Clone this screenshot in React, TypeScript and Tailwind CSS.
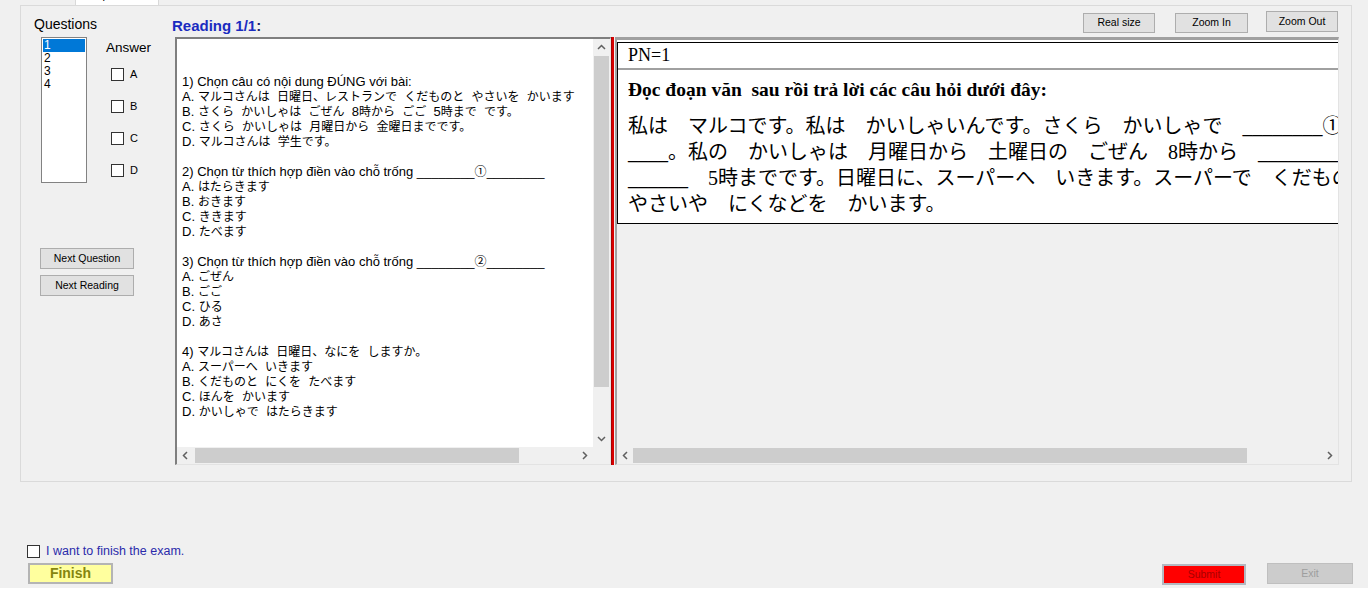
import React from "react";

// CJK runs get a slightly smaller size so kana lines fit like the original textbox
const cjkRun = /([\u2460-\u24ff\u3000-\u30ff\u4e00-\u9fff\uff00-\uffef]+)/;

function Mixed({ text }: { text: string }) {
    const parts = text.split(cjkRun);
    return (
        <>
            {parts.map((p, i) =>
                i % 2 === 1 ? (
                    <span key={i} className="text-[12px]">{p}</span>
                ) : (
                    <React.Fragment key={i}>{p}</React.Fragment>
                )
            )}
        </>
    );
}

const questionLines = [
    "1) Chọn câu có nội dung ĐÚNG với bài:",
    "A. マルコさんは  日曜日、レストランで  くだものと  やさいを  かいます",
    "B. さくら  かいしゃは  ごぜん  8時から  ごご  5時まで  です。",
    "C. さくら  かいしゃは  月曜日から  金曜日までです。",
    "D. マルコさんは  学生です。",
    "",
    "2) Chọn từ thích hợp điền vào chỗ trống ________①________",
    "A. はたらきます",
    "B. おきます",
    "C. ききます",
    "D. たべます",
    "",
    "3) Chọn từ thích hợp điền vào chỗ trống ________②________",
    "A. ごぜん",
    "B. ごご",
    "C. ひる",
    "D. あさ",
    "",
    "4) マルコさんは  日曜日、なにを  しますか。",
    "A. スーパーへ  いきます",
    "B. くだものと  にくを  たべます",
    "C. ほんを  かいます",
    "D. かいしゃで  はたらきます",
];

const readingLines = [
    "私は　マルコです。私は　かいしゃいんです。さくら　かいしゃで　________①",
    "____。私の　かいしゃは　月曜日から　土曜日の　ごぜん　8時から　________②",
    "______　5時までです。日曜日に、スーパーへ　いきます。スーパーで　くだものや",
    "やさいや　にくなどを　かいます。",
];

function Chevron({ dir }: { dir: "up" | "down" | "left" | "right" }) {
    const pts = {
        up: "1,6 4.5,2.5 8,6",
        down: "1,3 4.5,6.5 8,3",
        left: "6,1 2.5,4.5 6,8",
        right: "3,1 6.5,4.5 3,8",
    }[dir];
    return (
        <svg width="9" height="9" viewBox="0 0 9 9">
            <polyline points={pts} fill="none" stroke="#606060" strokeWidth="1.5" />
        </svg>
    );
}

function WinButton({ label, className = "" }: { label: string; className?: string }) {
    return (
        <div className={`bg-[#e1e1e1] border border-[#adadad] text-[10.5px] flex items-center justify-center ${className}`}>
            {label}
        </div>
    );
}

function Check() {
    return <div className="w-[13px] h-[13px] bg-white border border-[#333333] shrink-0" />;
}

export default function App() {
    return (
        <div className="w-[1372px] h-[594px] bg-white overflow-hidden font-['Liberation_Sans',sans-serif] text-black">
            <div className="w-[1368px] h-[588px] bg-[#f0f0f0] flex flex-col overflow-hidden">
                {/* tab strip, mostly scrolled out of view */}
                <div className="h-[5px] shrink-0 overflow-hidden">
                    <div className="-mt-[15px] h-[20px] flex items-end pl-[22px] text-[11px]">
                        <div className="w-[53px] h-[18px] flex items-center justify-end pr-[8px]">3</div>
                        <div className="w-[84px] h-[20px] bg-white border border-b-0 border-[#d9d9d9] flex items-center justify-center">
                            Multiple Choice
                        </div>
                    </div>
                </div>

                {/* tab page */}
                <div className="ml-[20px] w-[1332px] h-[477px] shrink-0 border border-[#dadada] flex pl-[13px] pr-[12px]">
                    {/* Left Col - question list + answers */}
                    <div className="w-[138px] shrink-0 flex flex-col">
                        <div className="mt-[10px] h-[16px] text-[14px] leading-[16px]">Questions</div>
                        <div className="mt-[5px] flex">
                            <div className="ml-[7px] w-[46px] h-[146px] bg-white border border-[#828282] text-[12px] leading-[13px] p-[1px]">
                                <div className="h-[13px] bg-[#0078d7] text-white pl-[1px]">1</div>
                                <div className="h-[13px] pl-[1px]">2</div>
                                <div className="h-[13px] pl-[1px]">3</div>
                                <div className="h-[13px] pl-[1px]">4</div>
                            </div>
                            <div className="ml-[19px] flex flex-col">
                                <div className="mt-[3px] text-[13.5px] leading-[16px]">Answer</div>
                                <div className="mt-[12px] ml-[5px] flex flex-col gap-[19px]">
                                    {["A", "B", "C", "D"].map((l) => (
                                        <div key={l} className="h-[13px] flex items-center">
                                            <Check />
                                            <span className="ml-[6px] text-[11px]">{l}</span>
                                        </div>
                                    ))}
                                </div>
                            </div>
                        </div>
                        <WinButton label="Next Question" className="mt-[65px] ml-[6px] w-[94px] h-[21px]" />
                        <WinButton label="Next Reading" className="mt-[6px] ml-[6px] w-[94px] h-[21px]" />
                    </div>

                    {/* Right Col - reading */}
                    <div className="flex-1 min-w-0 flex flex-col">
                        <div className="h-[31px] flex items-start">
                            <div className="mt-[11px] text-[15px] font-bold leading-[17px]">
                                <span className="text-[#1a2bc0]">Reading 1/1</span>
                                <span className="text-[#222266]">:</span>
                            </div>
                            <div className="flex-1" />
                            <WinButton label="Real size" className="mt-[7px] w-[72px] h-[20px]" />
                            <WinButton label="Zoom In" className="mt-[7px] ml-[20px] w-[73px] h-[20px]" />
                            <WinButton label="Zoom Out" className="mt-[5px] ml-[18px] mr-[1px] w-[72px] h-[21px]" />
                        </div>

                        <div className="h-[428px] flex">
                            {/* questions text box */}
                            <div className="ml-[3px] w-[436px] flex flex-col bg-white border-l-2 border-t-2 border-r border-b border-[#7f7f7f] border-r-[#e3e3e3] border-b-[#e3e3e3]">
                                <div className="flex-1 min-h-0 flex">
                                    <div className="flex-1 min-w-0 overflow-hidden pt-[35px] pl-[5px] text-[13px] leading-[15px] whitespace-pre font-['Liberation_Sans','Noto_Sans_CJK_JP',sans-serif]">
                                        {questionLines.map((t, i) => (
                                            <div key={i} className="h-[15px]">
                                                <Mixed text={t} />
                                            </div>
                                        ))}
                                    </div>
                                    <div className="w-[17px] flex flex-col bg-[#f0f0f0]">
                                        <div className="h-[17px] flex items-center justify-center">
                                            <Chevron dir="up" />
                                        </div>
                                        <div className="h-[331px] mx-[1px] bg-[#cdcdcd]" />
                                        <div className="flex-1" />
                                        <div className="h-[17px] flex items-center justify-center">
                                            <Chevron dir="down" />
                                        </div>
                                    </div>
                                </div>
                                <div className="h-[17px] flex bg-[#f0f0f0]">
                                    <div className="w-[17px] flex items-center justify-center">
                                        <Chevron dir="left" />
                                    </div>
                                    <div className="ml-[1px] my-[1px] w-[324px] bg-[#cdcdcd]" />
                                    <div className="flex-1" />
                                    <div className="w-[17px] flex items-center justify-center">
                                        <Chevron dir="right" />
                                    </div>
                                    <div className="w-[17px]" />
                                </div>
                            </div>

                            {/* splitter */}
                            <div className="w-[4px] bg-[#d90000] border-l border-l-[#a80000] border-r border-r-[#f0f0f0]" />

                            {/* reading passage viewer */}
                            <div className="flex-1 min-w-0 flex flex-col bg-[#f0f0f0] border-l-2 border-t-[3px] border-r border-b border-[#a0a0a0] border-r-[#e3e3e3] border-b-[#e3e3e3]">
                                <div className="flex-1 min-h-0 overflow-hidden font-['Liberation_Serif','Noto_Sans_CJK_JP',serif]">
                                    <div className="h-[2px] bg-white" />
                                    <div className="bg-white border-l border-t border-b border-black">
                                        <div className="h-[25px] pl-[10px] text-[18px] leading-[25px]">PN=1</div>
                                        <div className="h-[2px] bg-[#a0a0a0]" />
                                        <div className="pl-[10px] pt-[10px] pb-[6px]">
                                            <div className="text-[19.5px] font-bold leading-[20px] whitespace-pre">
                                                Đọc đoạn văn  sau rồi trả lời các câu hỏi dưới đây:
                                            </div>
                                            <div className="mt-[13px] text-[20px] leading-[26px] whitespace-pre">
                                                {readingLines.map((t, i) => (
                                                    <div key={i}>{t}</div>
                                                ))}
                                            </div>
                                        </div>
                                    </div>
                                </div>
                                <div className="h-[17px] flex">
                                    <div className="w-[16px] flex items-center justify-center">
                                        <Chevron dir="left" />
                                    </div>
                                    <div className="my-[1px] w-[614px] bg-[#cdcdcd]" />
                                    <div className="flex-1" />
                                    <div className="w-[17px] flex items-center justify-center">
                                        <Chevron dir="right" />
                                    </div>
                                </div>
                            </div>
                        </div>
                    </div>
                </div>

                {/* bottom bar */}
                <div className="mt-[63px] pl-[27px] h-[13px] flex items-center">
                    <Check />
                    <span className="ml-[6px] text-[12.5px] leading-[13px] text-[#2b2bab]">I want to finish the exam.</span>
                </div>
                <div className="mt-[5px] pl-[28px] pr-[15px] flex items-start">
                    <div className="w-[85px] h-[21px] bg-[#ffff9e] border-2 border-[#b4b4b4] flex items-center justify-center text-[14px] font-bold text-[#85850f]">
                        Finish
                    </div>
                    <div className="flex-1" />
                    <div className="mt-[1px] w-[84px] h-[21px] bg-[#ff0000] border-2 border-[#b4b8c0] flex items-center justify-center text-[10.5px] text-[#a80000]">
                        Submit
                    </div>
                    <div className="ml-[21px] w-[86px] h-[21px] bg-[#cccccc] border border-[#bfbfbf] flex items-center justify-center text-[10.5px] text-[#9e9e9e]">
                        Exit
                    </div>
                </div>
            </div>
        </div>
    );
}
